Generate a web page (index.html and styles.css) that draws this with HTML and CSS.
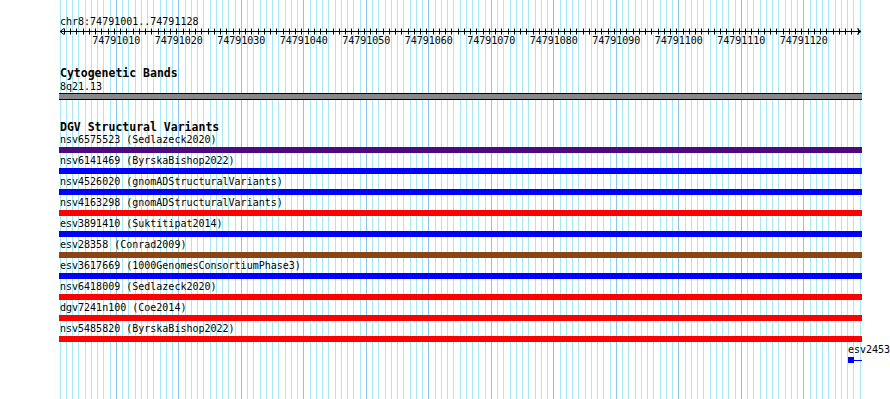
FILE: index.html
```html
<!DOCTYPE html>
<html lang="en">
<head>
    <meta charset="UTF-8">
    <title>chr8:74791001..74791128</title>
    <link rel="stylesheet" href="styles.css">
</head>
<body>
    <div class="browser">
        <svg class="guides" id="guides" width="890" height="399"></svg>

        <div class="tracks">
            <div class="position">chr8:74791001..74791128</div>
            <svg class="ruler" id="ruler" width="803" height="20"></svg>

            <section class="track cyto">
                <div class="track-title">Cytogenetic Bands</div>
                <div class="label">8q21.13</div>
                <div class="band"></div>
            </section>

            <section class="track dgv">
                <div class="track-title">DGV Structural Variants</div>
                <div class="item"><div class="label">nsv6575523 (Sedlazeck2020)</div><div class="bar gainloss"></div></div>
                <div class="item"><div class="label">nsv6141469 (ByrskaBishop2022)</div><div class="bar gain"></div></div>
                <div class="item"><div class="label">nsv4526020 (gnomADStructuralVariants)</div><div class="bar gain"></div></div>
                <div class="item"><div class="label">nsv4163298 (gnomADStructuralVariants)</div><div class="bar loss"></div></div>
                <div class="item"><div class="label">esv3891410 (Suktitipat2014)</div><div class="bar gain"></div></div>
                <div class="item"><div class="label">esv28358 (Conrad2009)</div><div class="bar inversion"></div></div>
                <div class="item"><div class="label">esv3617669 (1000GenomesConsortiumPhase3)</div><div class="bar gain"></div></div>
                <div class="item"><div class="label">nsv6418009 (Sedlazeck2020)</div><div class="bar loss"></div></div>
                <div class="item"><div class="label">dgv7241n100 (Coe2014)</div><div class="bar loss"></div></div>
                <div class="item"><div class="label">nsv5485820 (ByrskaBishop2022)</div><div class="bar loss"></div></div>
                <div class="item partial">
                    <div class="label">esv2453</div>
                    <div class="stub"><span class="stub-box"></span><span class="stub-line"></span></div>
                </div>
            </section>
        </div>
    </div>

    <script>
        const SVG_NS = 'http://www.w3.org/2000/svg';
        const start = 74791001;
        const bases = 128;
        const left = 60;
        const bp = 6.25;
        const rulerLeft = 59;

        const addLine = (svg, x1, y1, x2, y2, cls) => {
            const line = document.createElementNS(SVG_NS, 'line');
            line.setAttribute('x1', x1);
            line.setAttribute('y1', y1);
            line.setAttribute('x2', x2);
            line.setAttribute('y2', y2);
            line.setAttribute('class', cls);
            svg.appendChild(line);
        };

        // Vertical guidelines, one per base, darker every 10
        const guides = document.getElementById('guides');
        for (let k = 0; k <= bases; k++) {
            const x = Math.floor(left + k * bp) + 0.5;
            const cls = (start + k) % 10 === 0 ? 'guide major' : 'guide';
            addLine(guides, x, 0, x, 399, cls);
        }

        // Base position ruler
        const ruler = document.getElementById('ruler');
        const r = x => x - rulerLeft;
        addLine(ruler, r(60), 3.5, r(861), 3.5, 'axis');
        addLine(ruler, r(60), 3.5, r(64), 0.5, 'axis');
        addLine(ruler, r(60), 3.5, r(64), 6.5, 'axis');
        addLine(ruler, r(861), 3.5, r(857), 0.5, 'axis');
        addLine(ruler, r(861), 3.5, r(857), 6.5, 'axis');

        for (let k = 1; k <= bases; k++) {
            const x = r(Math.floor(58 + k * bp)) + 0.5;
            addLine(ruler, x, 0.5, x, 6.5, 'axis');
        }

        for (let k = 0; k < bases; k++) {
            if ((start + k) % 10 !== 0) continue;
            const text = document.createElementNS(SVG_NS, 'text');
            text.setAttribute('x', r(left + k * bp));
            text.setAttribute('y', 16);
            text.setAttribute('class', 'tick-label');
            text.textContent = start + k;
            ruler.appendChild(text);
        }
    </script>
</body>
</html>
```

FILE: styles.css
```css
:root {
    --guide-color: #a8e8f4;
    --guide-major: #88c4ec;
    --gain: #0000ff;
    --loss: #ff0000;
    --gainloss: #4b0a80;
    --inversion: #8b4513;
    --band-gray: #888888;
}

body {
    margin: 0;
    background-color: #ffffff;
    color: #000000;
    font-family: 'DejaVu Sans Mono', 'Liberation Mono', monospace;
    font-size: 10px;
    overflow: hidden;
}

.browser {
    position: relative;
    width: 890px;
    height: 399px;
    overflow: hidden;
}

.guides {
    position: absolute;
    top: 0;
    left: 0;
}

.guide {
    stroke: var(--guide-color);
    stroke-width: 1;
}

.guide.major {
    stroke: var(--guide-major);
}

.tracks {
    position: relative;
    width: 803px;
    padding: 16px 0 0 59px;
}

.position,
.label {
    height: 12px;
    line-height: 11px;
    padding-left: 1px;
    white-space: nowrap;
}

.ruler {
    display: block;
}

.axis {
    stroke: #000000;
    stroke-width: 1;
}

.tick-label {
    font-family: 'DejaVu Sans Mono', 'Liberation Mono', monospace;
    font-size: 10px;
    text-anchor: middle;
    fill: #000000;
}

.track-title {
    height: 12px;
    line-height: 11px;
    padding-left: 1px;
    font-size: 11.5px;
    font-weight: bold;
    white-space: nowrap;
}

.cyto {
    margin-top: 20px;
}

.cyto .label {
    margin-top: 1px;
}

.band {
    height: 5px;
    background-color: var(--band-gray);
    border-top: 1px solid #000000;
    border-bottom: 1px solid #000000;
}

.dgv {
    margin-top: 22px;
}

.item {
    margin-bottom: 2px;
}

.bar {
    height: 6px;
    margin-top: 1px;
}

.bar.gain { background-color: var(--gain); }
.bar.loss { background-color: var(--loss); }
.bar.gainloss { background-color: var(--gainloss); }
.bar.inversion { background-color: var(--inversion); }

.partial {
    padding-left: 789px;
}

.partial .label {
    padding-left: 0;
}

.stub {
    display: flex;
    align-items: center;
    height: 6px;
    margin-top: 1px;
}

.stub-box {
    width: 6px;
    height: 6px;
    background-color: var(--gain);
}

.stub-line {
    width: 8px;
    height: 1px;
    background-color: var(--gain);
}
```
